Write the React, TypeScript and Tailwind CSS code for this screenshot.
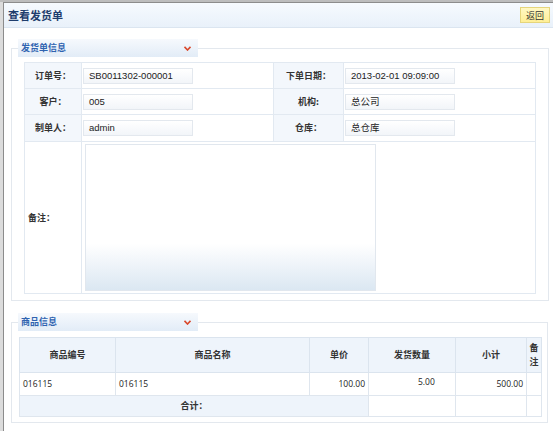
import React from "react";

const cjk = { fontFamily: '"Noto Sans CJK SC", "Liberation Sans", sans-serif' };

function Input({ value, latin }: { value: string; latin?: boolean }) {
  return (
    <div
      className="w-[110px] h-[16px] border border-[#e3e8ee] bg-[linear-gradient(to_bottom,#ffffff,#f2f5f9)] pl-[5px] flex items-center text-[9.5px] text-[#222] leading-none"
      style={latin ? { fontFamily: '"Liberation Sans", Arial, sans-serif' } : cjk}
    >
      {value}
    </div>
  );
}

function Legend({ text }: { text: string }) {
  return (
    <legend className="ml-[6px] w-[180px] h-[18px] bg-[linear-gradient(to_bottom,#f6f9fd,#e2ecf7)] flex items-center justify-between pl-[3px] pr-[7px]">
      <span className="text-[9px] font-bold text-[#2f63b0]" style={cjk}>
        {text}
      </span>
      <svg width="7" height="5" viewBox="0 0 7 5">
        <path d="M0.5 0.8 L3.5 4 L6.5 0.8" fill="none" stroke="#d9482b" strokeWidth="1.6" />
      </svg>
    </legend>
  );
}

export default function App() {
  const labelCell =
    "bg-[#f3f7fc] border border-[#e2e9f1] text-center text-[9px] font-bold text-[#333]";
  const valueCell = "border border-[#e2e9f1] pl-[1px]";
  const th = "border border-[#dbe4ee] text-center text-[9px] font-bold text-[#333]";
  const td = "border border-[#dfe6ee] text-[8.5px] text-[#222]";
  const num = { fontFamily: '"Open Sans", "Liberation Sans", sans-serif' };

  return (
    <div className="w-[553px] h-[431px] overflow-hidden bg-[#dcdcdc] border-t-2 border-[#bdbdbd] pl-[3px]" style={cjk}>
      <div className="w-full h-full bg-white border-l border-t border-[#8c8c8c]">
        {/* Title bar */}
        <div className="h-[25px] bg-[linear-gradient(to_bottom,#f6fafe,#e9f1fa)] border-b border-[#dbe5f0] flex items-center justify-between pl-[4px] pr-[3px]">
          <span className="text-[11px] font-bold text-[#1f3d6d]">查看发货单</span>
          <button className="w-[30px] h-[16px] border border-[#e5d57c] bg-[linear-gradient(to_bottom,#fff8c4,#ffef96)] text-[9px] text-[#333] flex items-center justify-center leading-none">
            返回
          </button>
        </div>

        {/* Fieldset 1 */}
        <fieldset className="mt-[11px] ml-[7px] mr-[5px] border border-[#e3e8ee] pb-[6px]">
          <Legend text="发货单信息" />
          <table className="mt-[5px] mx-[12px] w-[511px] table-fixed border-collapse">
            <colgroup>
              <col className="w-[57px]" />
              <col className="w-[192px]" />
              <col className="w-[70px]" />
              <col className="w-[192px]" />
            </colgroup>
            <tbody>
              <tr className="h-[26px]">
                <td className={labelCell}>订单号：</td>
                <td className={valueCell}>
                  <Input value="SB0011302-000001" latin />
                </td>
                <td className={labelCell}>下单日期：</td>
                <td className={valueCell}>
                  <Input value="2013-02-01 09:09:00" latin />
                </td>
              </tr>
              <tr className="h-[26px]">
                <td className={labelCell}>客户：</td>
                <td className={valueCell}>
                  <Input value="005" latin />
                </td>
                <td className={labelCell}>机构:</td>
                <td className={valueCell}>
                  <Input value="总公司" />
                </td>
              </tr>
              <tr className="h-[27px]">
                <td className={labelCell}>制单人：</td>
                <td className={valueCell}>
                  <Input value="admin" latin />
                </td>
                <td className={labelCell}>仓库：</td>
                <td className={valueCell}>
                  <Input value="总仓库" />
                </td>
              </tr>
              <tr className="h-[152px]">
                <td className="border border-[#e2e9f1] pl-[3px] text-[9px] font-bold text-[#333]">备注：</td>
                <td colSpan={3} className="border border-[#e2e9f1] pl-[3px] py-[2px] align-middle">
                  <div className="w-[291px] h-[147px] border border-[#e1e7ee] bg-[linear-gradient(to_bottom,#ffffff_68%,#dbe7f2)]" />
                </td>
              </tr>
            </tbody>
          </table>
        </fieldset>

        {/* Fieldset 2 */}
        <fieldset className="mt-[12px] ml-[7px] mr-[5px] border border-[#e3e8ee] pb-[5px]">
          <Legend text="商品信息" />
          <table className="mt-[6px] ml-[7px] w-[522px] table-fixed border-collapse">
            <colgroup>
              <col className="w-[96px]" />
              <col className="w-[194px]" />
              <col className="w-[59px]" />
              <col className="w-[87px]" />
              <col className="w-[71px]" />
              <col className="w-[15px]" />
            </colgroup>
            <thead>
              <tr className="h-[35px] bg-[#eef4fb]">
                <th className={th}>商品编号</th>
                <th className={th}>商品名称</th>
                <th className={th}>单价</th>
                <th className={th}>发货数量</th>
                <th className={th}>小计</th>
                <th className={th + " leading-[14px]"}>
                  备<br />注
                </th>
              </tr>
            </thead>
            <tbody>
              <tr className="h-[23px]">
                <td className={td + " pl-[3px]"} style={num}>016115</td>
                <td className={td + " pl-[3px]"} style={num}>016115</td>
                <td className={td + " text-right pr-[3px]"} style={num}>100.00</td>
                <td className={td + " align-top pt-[3px] pl-[49px]"} style={num}>5.00</td>
                <td className={td + " text-right pr-[3px]"} style={num}>500.00</td>
                <td className={td}></td>
              </tr>
              <tr className="h-[21px]">
                <td colSpan={3} className="border border-[#dfe6ee] bg-[#eef4fb] text-center text-[9px] font-bold text-[#333]">
                  合计：
                </td>
                <td className={td}></td>
                <td className={td}></td>
                <td className={td}></td>
              </tr>
            </tbody>
          </table>
        </fieldset>
      </div>
    </div>
  );
}
